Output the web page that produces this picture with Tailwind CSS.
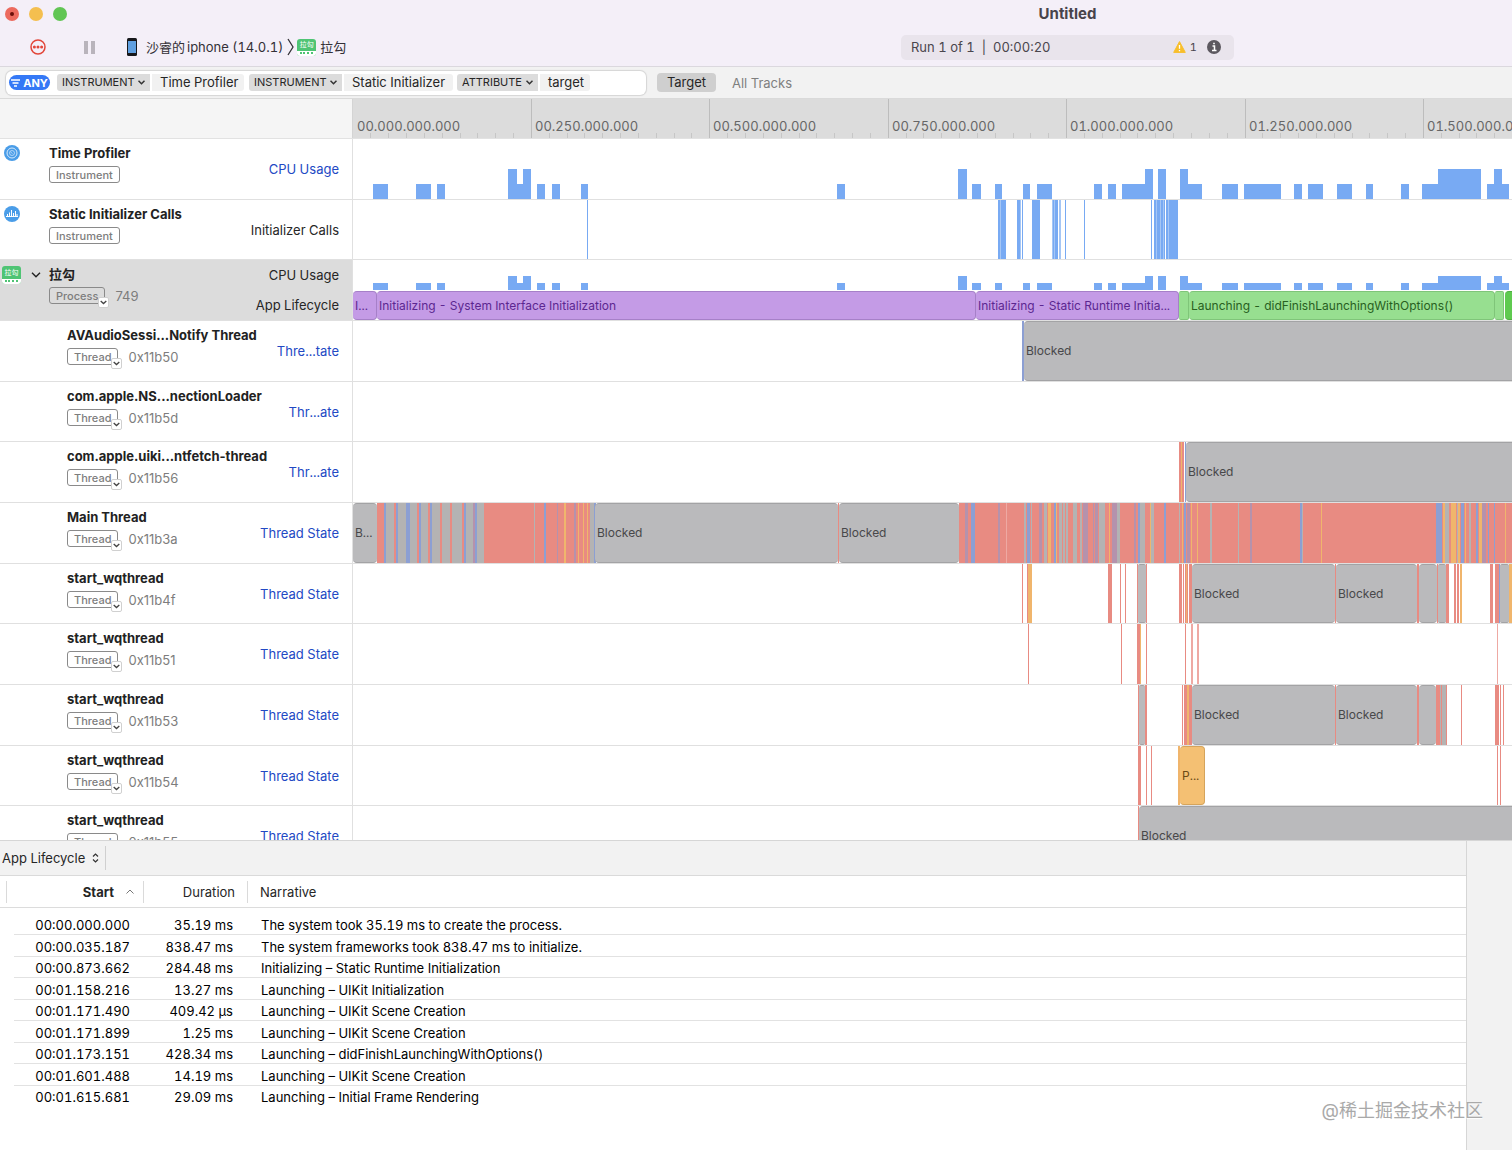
<!DOCTYPE html>
<html lang="en">

<head>
  <meta charset="UTF-8">
  <meta name="viewport" content="width=device-width, initial-scale=1.0">
  <title>Untitled</title>
  <script src="https://cdn.jsdelivr.net/npm/@tailwindcss/browser@4"></script>
</head>

<body class="flex flex-col h-screen overflow-hidden bg-white text-[#262626] text-[13px] leading-5 tabular-nums font-['Inter','Noto_Sans_CJK_SC',sans-serif]">

  <!-- Title bar -->
  <header class="grid grid-cols-[1fr_333px_278px] grid-rows-[28px_38px] items-center shrink-0 bg-[#f4eff8] border-b border-[#dbd8de]">
    <div class="flex gap-[10px] pl-[5px]">
      <button class="flex items-center justify-center size-[14px] rounded-full bg-[#ec6a5e]" aria-label="Close"><span class="size-1 rounded-full bg-[#6b0f0a]"></span></button>
      <button class="size-[14px] rounded-full bg-[#f4bf4f]" aria-label="Minimize"></button>
      <button class="size-[14px] rounded-full bg-[#61c554]" aria-label="Zoom"></button>
    </div>
    <h1 class="text-center text-[15px] font-bold text-[#48444b]">Untitled</h1>
    <div></div>

    <div class="flex items-center pl-[30px]">
      <button aria-label="Stop recording">
        <svg class="size-4" viewBox="0 0 16 16" fill="none" stroke="#e2463a">
          <circle cx="8" cy="8" r="7" stroke-width="1.5" />
          <g fill="#e2463a" stroke="none"><circle cx="4.4" cy="8" r="1.5" /><circle cx="8" cy="8" r="1.5" /><circle cx="11.6" cy="8" r="1.5" /></g>
        </svg>
      </button>
      <button class="ml-[38px]" aria-label="Pause">
        <svg class="w-[11px] h-[13px]" viewBox="0 0 11 13" fill="#b9b4bc"><rect width="4" height="13" /><rect x="7" width="4" height="13" /></svg>
      </button>
      <button class="flex items-center ml-8 text-[#333036]">
        <svg class="w-[10px] h-[18px]" viewBox="0 0 10 18"><rect width="10" height="18" rx="1.5" fill="#17181c" /><rect x="1" y="3" width="8" height="12" fill="#5f9fe0" /></svg>
        <span class="flex gap-[2px] ml-[9px]"><span>沙睿的</span><span>iphone (14.0.1)</span></span>
        <svg class="w-[7px] h-[18px] ml-1" viewBox="0 0 7 18" fill="none" stroke="#333036" stroke-width="1.3"><path d="M1 1l5 8-5 8" /></svg>
      </button>
      <button class="flex items-center ml-[3px] text-[#333036]">
        <span class="flex flex-col w-[19px] rounded-[3px] bg-[#4fc474] text-white text-[7px] leading-[12px] text-center overflow-hidden">拉勾<span class="flex justify-center h-[5px] pt-px bg-white"><span class="w-[13px] border-t-2 border-dotted border-[#4fc474]"></span></span></span>
        <span class="ml-1">拉勾</span>
      </button>
    </div>
    <div class="flex items-center h-[25px] pl-[10px] pr-[13px] rounded-[5px] bg-[#e9e4ec] text-[#4a464d]">
      <span class="whitespace-pre">Run 1 of 1  |  00:00:20</span>
      <svg class="w-[13px] h-[12px] ml-auto" viewBox="0 0 13 12"><path d="M6.500.6 12.300 11.400H.7z" fill="#f8bf2c" stroke="#f8bf2c" stroke-linejoin="round" /><path d="M6.500 4v3.700M6.500 8.900v1.300" stroke="#fff" stroke-width="1.300" /></svg>
      <span class="ml-1 text-[11px]">1</span>
      <button class="ml-[10px]" aria-label="Info">
        <svg class="size-[14px]" viewBox="0 0 14 14"><circle cx="7" cy="7" r="7" fill="#5c585f" /><path d="M5.500 6h2v4.500M5 10.500h4.500M6.200 3.500h1.600" stroke="#fff" stroke-width="1.500" fill="none" /></svg>
      </button>
    </div>
  </header>

  <!-- Filter bar -->
  <div class="flex items-center h-8 shrink-0 pl-[6px] bg-[#f2f2f2] border-b border-[#dadada]">
    <div class="flex items-center w-[640px] h-6 pl-[3px] rounded-md bg-white shadow-[0_0_1px_1px_rgb(0_0_0/0.12)]">
      <button class="flex items-center justify-center gap-[3px] w-[41px] h-[15px] rounded-full bg-[#3478f6] text-white text-[11px] font-bold">
        <svg class="w-[9px] h-[8px]" viewBox="0 0 9 8" stroke="#fff" stroke-width="1.300"><path d="M0 1h9M1.500 4h6M3 7h3" /></svg>ANY
      </button>
      <div class="relative ml-[7px]">
        <select class="block appearance-none w-[93px] h-[17px] pl-[5px] rounded-l-[3px] bg-[#dcdcdc] text-[11px] leading-[17px]" aria-label="Filter field"><option>INSTRUMENT</option></select>
        <svg class="absolute right-[5px] top-[6px] w-[7px] h-[5px] pointer-events-none" viewBox="0 0 7 5" fill="none" stroke="#333" stroke-width="1.500"><path d="M.5.7l3 3 3-3" /></svg>
      </div>
      <span class="w-[92px] h-[17px] ml-[2px] pl-2 rounded-r-[3px] bg-[#f1f1f1] leading-4 whitespace-nowrap">Time Profiler</span>
      <div class="relative ml-[5px]">
        <select class="block appearance-none w-[93px] h-[17px] pl-[5px] rounded-l-[3px] bg-[#dcdcdc] text-[11px] leading-[17px]" aria-label="Filter field"><option>INSTRUMENT</option></select>
        <svg class="absolute right-[5px] top-[6px] w-[7px] h-[5px] pointer-events-none" viewBox="0 0 7 5" fill="none" stroke="#333" stroke-width="1.500"><path d="M.5.7l3 3 3-3" /></svg>
      </div>
      <span class="w-[109px] h-[17px] ml-[2px] pl-2 rounded-r-[3px] bg-[#f1f1f1] leading-4 whitespace-nowrap">Static Initializer</span>
      <div class="relative ml-1">
        <select class="block appearance-none w-[81px] h-[17px] pl-[5px] rounded-l-[3px] bg-[#dcdcdc] text-[11px] leading-[17px]" aria-label="Filter field"><option>ATTRIBUTE</option></select>
        <svg class="absolute right-[5px] top-[6px] w-[7px] h-[5px] pointer-events-none" viewBox="0 0 7 5" fill="none" stroke="#333" stroke-width="1.500"><path d="M.5.7l3 3 3-3" /></svg>
      </div>
      <span class="w-[50px] h-[17px] ml-[2px] pl-2 rounded-r-[3px] bg-[#f1f1f1] leading-4 whitespace-nowrap">target</span>
      <input class="flex-1 min-w-0 px-1 outline-none" type="text" aria-label="Filter">
    </div>
    <button class="w-[59px] h-[19px] ml-[11px] rounded bg-[#cfcfcf] leading-[19px]">Target</button>
    <button class="ml-4 text-[#7f7f7f]">All Tracks</button>
  </div>

  <!-- Ruler -->
  <div class="flex h-10 shrink-0 border-b border-[#e2e2e2]">
    <div class="w-[353px] shrink-0 bg-[#f5f5f5] border-r border-[#d4d4d4]"></div>
    <div id="ruler" class="relative flex-1 overflow-hidden bg-[#dcdcdc] text-[#666]"></div>
  </div>

  <!-- Tracks -->
  <main id="tracks" class="grid grid-cols-1 grid-rows-[repeat(4,61px_60px_61px)] content-start flex-1 min-h-0 overflow-hidden"></main>

  <!-- Detail pane -->
  <section class="flex h-[310px] shrink-0 border-t border-[#d6d6d6]">
    <div class="flex-1 min-w-0">
      <div class="flex items-center h-[35px] bg-[#f2f2f2] border-b border-[#dadada]">
        <div class="relative">
          <select class="block appearance-none w-[106px] h-6 pl-[2px] border-r border-[#d0d0d0]" aria-label="Detail view"><option>App Lifecycle</option></select>
          <svg class="absolute right-[7px] top-[7px] w-[7px] h-[10px] pointer-events-none" viewBox="0 0 7 10" fill="none" stroke="#333" stroke-width="1.200"><path d="M1 3.500 3.500 1 6 3.500M1 6.500 3.500 9 6 6.500" /></svg>
        </div>
      </div>
      <table class="w-full table-fixed border-separate border-spacing-0">
        <thead>
          <tr class="h-8">
            <th class="w-[14px] p-0 border-b border-[#dcdcdc]"><div class="w-[7px] h-[22px] border-r border-[#dadada]"></div></th>
            <th class="w-[130px] p-0 border-b border-[#dcdcdc] font-bold">
              <div class="flex items-center justify-end h-[22px] pr-[9px] border-r border-[#dadada]">Start
                <svg class="w-2 h-[5px] ml-3" viewBox="0 0 8 5" fill="none" stroke="#777"><path d="M.5 4.500 4 1l3.500 3.500" /></svg>
              </div>
            </th>
            <th class="w-[104px] p-0 border-b border-[#dcdcdc] font-normal"><div class="h-[22px] pr-3 border-r border-[#dadada] text-right leading-[22px]">Duration</div></th>
            <th class="p-0 pl-3 border-b border-[#dcdcdc] font-normal text-left">Narrative</th>
          </tr>
        </thead>
        <tbody id="events" class="before:block before:h-[6px] text-black leading-[17px] align-bottom"></tbody>
      </table>
    </div>
    <aside class="w-[46px] shrink-0 bg-[#f2f2f2] border-l border-[#d6d6d6]"></aside>
  </section>

  <div class="absolute right-[29px] bottom-[27px] text-[18px] leading-6 text-[#a9a9a9] [text-shadow:0_1px_1px_#fff] pointer-events-none">@稀土掘金技术社区</div>

  <script>
    // x of time zero; every x below counts from the left edge of the window
    const ORIGIN = 353;
    const END = 4000;

    const fills = {
      r: 'bg-[#e88b82]',
      b: 'bg-[#8c9fd3]',
      p: 'bg-[#b592ac]',
      o: 'bg-[#f0b56c]',
      g: 'bg-[#b4b3b3]',
      l: 'bg-[#eea9a3]',
      c: 'bg-[#78aaf3]',
      d: 'bg-[#a5c6f5]',
    };

    const blocks = {
      blocked: 'bg-[#bababc] border-[#a3a3a5] text-[#48484a]',
      preempted: 'bg-[#f4c073] border-[#d5a45c] text-[#6b4a14]',
      init: 'bg-[#c49be6] border-[#a680c8] text-[#5c2791]',
      launch: 'bg-[#97df90] border-[#7fc579] text-[#28601f]',
      front: 'bg-[#5fca50] border-[#4fae42] text-black',
    };

    // [x, width, level]
    const cpu = [
      [373, 15, 1], [416, 15, 1], [437, 8, 1], [508, 9, 2], [517, 6, 1], [523, 8, 2], [537, 8, 1], [552, 8, 1], [581, 7, 1],
      [837, 8, 1], [958, 9, 2], [972, 9, 1], [995, 7, 1], [1023, 7, 1], [1037, 15, 1], [1094, 8, 1], [1108, 8, 1],
      [1122, 23, 1], [1145, 8, 2], [1158, 8, 2], [1180, 8, 2], [1188, 14, 1], [1222, 16, 1], [1244, 37, 1], [1294, 8, 1],
      [1308, 15, 1], [1337, 15, 1], [1366, 7, 1], [1401, 8, 1], [1422, 16, 1], [1438, 43, 2], [1487, 7, 1], [1494, 8, 2], [1502, 7, 1],
    ];

    // thin spans: "fill x,width"
    const initCalls = 'c587,1 c998,2 d1000,1 c1001,5 c1017,3 d1020,1 c1022,1 c1032,8 d1052,1 c1053,1 d1054,1 c1055,3 d1059,2 c1065,1 c1084,1 c1151,1 c1154,2 d1156,1 c1157,3 d1160,1 c1161,2 d1163,1 c1164,1 c1166,2 d1168,1 c1169,9';

    const mainSpans = 'g377,107 r377,7 b384,2 r394,2 b396,2 b406,4 r417,2 b419,2 r428,2 b430,2 r440,2 r450,2 r462,2 b464,2 p473,2 b475,2 ' +
      'r484,106 g534,1 b544,2 p557,1 o564,2 p574,2 o578,1 o583,1 o587,1 g590,4 b594,2 r838,1 ' +
      'r959,553 p965,3 b971,4 p998,2 l1006,1 g1024,2 b1027,3 g1031,1 p1039,3 g1044,3 o1048,3 b1054,2 o1056,1 g1059,3 g1063,2 g1066,2 ' +
      'g1073,4 g1080,2 p1083,5 p1093,1 p1095,3 g1099,6 o1109,1 p1112,5 g1117,3 p1134,2 b1138,2 g1140,5 o1150,1 g1151,3 b1164,2 ' +
      'g1179,1 o1182,1 b1184,2 p1187,3 o1191,1 o1197,1 g1210,2 g1238,1 p1250,2 b1300,2 g1302,1 o1321,1 b1436,6 o1443,2 g1445,4 ' +
      'o1451,5 g1457,1 o1458,2 b1461,3 o1465,1 g1469,2 b1476,2 o1479,3 p1482,4 b1488,1 b1494,1 o1505,1';

    const rows = [
      { icon: 'profiler', name: 'Time Profiler', badge: 'Instrument', labels: ['CPU Usage'], link: true, cpu: 15 },
      { icon: 'initializer', name: 'Static Initializer Calls', badge: 'Instrument', labels: ['Initializer Calls'], spans: initCalls },
      { icon: 'app', name: '拉勾', badge: 'Process', id: '749', labels: ['CPU Usage', 'App Lifecycle'], selected: true, cpu: 7,
        blocks: [['init', 353, 377, 'I...'], ['init', 377, 976, 'Initializing - System Interface Initialization'], ['init', 976, 1179, 'Initializing - Static Runtime Initia...'],
          ['launch', 1179, 1189], ['launch', 1189, 1495, 'Launching - didFinishLaunchingWithOptions()'], ['launch', 1495, 1504], ['front', 1505, END]] },
      { name: 'AVAudioSessi...Notify Thread', id: '0x11b50', labels: ['Thre...tate'], spans: 'b1022,2', blocks: [['blocked', 1024, END, 'Blocked']] },
      { name: 'com.apple.NS...nectionLoader', id: '0x11b5d', labels: ['Thr...ate'] },
      { name: 'com.apple.uiki...ntfetch-thread', id: '0x11b56', labels: ['Thr...ate'], spans: 'r1179,2 o1181,1 r1182,2 b1185,1', blocks: [['blocked', 1186, END, 'Blocked']] },
      { name: 'Main Thread', id: '0x11b3a', labels: ['Thread State'], spans: mainSpans,
        blocks: [['blocked', 353, 377, 'B...'], ['blocked', 595, 838, 'Blocked'], ['blocked', 839, 959, 'Blocked']] },
      { name: 'start_wqthread', id: '0x11b4f', labels: ['Thread State'],
        spans: 'r1022,1 r1027,1 o1028,4 r1108,4 r1120,1 r1125,1 r1137,1 r1146,1 r1179,3 r1183,1 r1185,1 o1186,1 r1187,1 r1189,3 r1335,1 r1417,2 r1437,1 r1446,3 r1454,2 r1457,2 o1460,2 r1490,3 r1495,4 b1499,1 o1509,3',
        blocks: [['blocked', 1138, 1146], ['blocked', 1192, 1335, 'Blocked'], ['blocked', 1336, 1417, 'Blocked'], ['blocked', 1419, 1437], ['blocked', 1438, 1446], ['blocked', 1500, 1509]] },
      { name: 'start_wqthread', id: '0x11b51', labels: ['Thread State'], spans: 'r1028,1 r1121,1 r1137,3 o1140,1 r1146,1 r1185,1 l1191,2 l1197,2 l1497,1' },
      { name: 'start_wqthread', id: '0x11b53', labels: ['Thread State'],
        spans: 'r1138,1 r1145,2 r1182,1 r1184,3 o1187,2 r1189,3 r1335,1 r1417,2 r1436,4 g1440,1 r1441,1 g1442,4 r1446,1 r1461,1 r1495,4 r1500,1 r1503,1',
        blocks: [['blocked', 1139, 1145], ['blocked', 1192, 1335, 'Blocked'], ['blocked', 1336, 1417, 'Blocked'], ['blocked', 1419, 1436]] },
      { name: 'start_wqthread', id: '0x11b54', labels: ['Thread State'], spans: 'r1138,3 r1146,1 r1151,1 o1178,2 r1497,1 r1500,1', blocks: [['preempted', 1180, 1205, 'P...']] },
      { name: 'start_wqthread', id: '0x11b55', labels: ['Thread State'], spans: 'r1138,1', blocks: [['blocked', 1139, END, 'Blocked']] },
    ];

    const icons = {
      profiler: `<svg class="size-4 ml-[4px]" viewBox="0 0 16 16" fill="none" stroke="#d6eafc"><circle cx="8" cy="8" r="8" fill="#4a9de8" stroke="none" /><circle cx="8" cy="8" r="5" /><circle cx="8" cy="8" r="2.500" stroke-width=".7" /><path d="M6.500 7l2 1.500" stroke-width=".7" /></svg>`,
      initializer: `<svg class="size-4 ml-[4px]" viewBox="0 0 16 16" fill="none" stroke="#fff"><circle cx="8" cy="8" r="8" fill="#4a9de8" stroke="none" /><path d="M2 10.500h12M3.500 10V8M5.500 10V6.500M7.500 10V4M9.500 10V7M11.500 10V5M13 10V8" /></svg>`,
      app: `<span class="flex flex-col w-[19px] ml-[2px] rounded-[3px] bg-[#4fc474] text-white text-[7px] leading-[13px] text-center overflow-hidden">拉勾<span class="flex justify-center h-[5px] pt-px bg-white"><span class="w-[13px] border-t-2 border-dotted border-[#4fc474]"></span></span></span>`,
    };

    const drawSpans = list => (list ? list.split(' ') : []).map(item => {
      const [x, w] = item.slice(1).split(',').map(Number);
      return `<i class="absolute inset-y-0 ${fills[item[0]]}" style="left:${x - ORIGIN}px;width:${w}px"></i>`;
    }).join('');

    const drawBlocks = (list, place) => (list || []).map(([kind, from, to, text]) =>
      `<div class="absolute ${place} flex items-center border-y overflow-hidden whitespace-nowrap text-[12px] ${to - from > 12 ? 'rounded-[4px]' : 'rounded-[2px]'} ${kind === 'blocked' ? '' : 'border-r'} ${text ? 'pl-[2px]' : ''} ${blocks[kind]}" style="left:${from - ORIGIN}px;width:${to - from}px">${text || ''}</div>`
    ).join('');

    const drawCpu = unit => cpu.map(([x, w, level]) =>
      `<i class="absolute bottom-0 ${fills.c}" style="left:${x - ORIGIN}px;width:${w}px;height:${level * unit}px"></i>`
    ).join('');

    document.getElementById('tracks').innerHTML = rows.map(row => {
      const isThread = !row.badge;
      const labels = row.labels.map(label => row.link || isThread
        ? `<a class="flex flex-1 items-center text-[#2249c4]" href="#">${label}</a>`
        : `<span class="flex flex-1 items-center">${label}</span>`).join('');
      return `
        <div class="flex min-h-0">
          <div class="flex w-[353px] shrink-0 border-r border-b border-[#e0e0e0] ${row.selected ? 'bg-[#dcdcdc]' : ''}">
            <div class="w-[31px] shrink-0 pt-[6px]">${icons[row.icon] || ''}</div>
            <div class="w-[18px] shrink-0 pt-[12px]">${row.selected ? '<svg class="w-[10px] h-[6px]" viewBox="0 0 10 6" fill="none" stroke="#222" stroke-width="1.400"><path d="M1 .7l4 4 4-4" /></svg>' : ''}</div>
            <div class="flex-1 min-w-0 pt-1 whitespace-nowrap proportional-nums ${isThread ? 'pl-[18px]' : ''}">
              <h2 class="font-bold text-[#222]">${row.name}</h2>
              <div class="flex items-center h-[17px] mt-[3px] text-[#7d7d7d]">
                <span class="relative flex items-center h-[17px] px-[6px] rounded-[3px] border border-[#8a8a8a] text-[11px] font-medium">${row.badge || 'Thread'}${row.id ? `
                  <button class="absolute -right-[5px] -bottom-[5px] flex items-center justify-center size-[11px] rounded-[2px] border border-[#d0d0d0] bg-white" aria-label="Options"><svg class="w-[7px] h-[5px]" viewBox="0 0 7 5" fill="none" stroke="#444" stroke-width="1.300"><path d="M.7.9l2.800 2.600L6.300.9" /></svg></button>` : ''}
                </span>
                <span class="ml-[10px]">${row.id || ''}</span>
              </div>
            </div>
            <div class="flex flex-col items-end pr-[13px]">${labels}</div>
          </div>
          <div class="relative flex-1 overflow-hidden border-b border-[#e0e0e0]">
            ${row.cpu ? `<div class="relative ${row.selected ? 'h-[30px]' : 'h-full'}">${drawCpu(row.cpu)}</div>` : ''}
            ${drawSpans(row.spans)}
            ${drawBlocks(row.blocks, row.selected ? 'bottom-0 h-[29px]' : 'inset-y-0')}
          </div>
        </div>`;
    }).join('');

    // one major tick each 250 ms, ten minor ticks between
    const rulerEl = document.getElementById('ruler');
    let ruler = '';
    for (let i = 0; i * 17.85 < rulerEl.clientWidth; i++) {
      const x = Math.floor(i * 17.84);
      if (i % 10 === 0) {
        const ms = i * 25;
        const label = String(Math.floor(ms / 1000)).padStart(2, '0') + '.' + String(ms % 1000).padStart(3, '0') + '.000.000';
        ruler += `<div class="absolute inset-y-0 flex items-end pb-[2px] ${i ? 'pl-[3px] border-l border-[#bdbdbd]' : 'pl-1'}" style="left:${x}px">${label}</div>`;
      } else {
        ruler += `<i class="absolute bottom-0 w-px h-[5px] bg-[#c6c6c6]" style="left:${x}px"></i>`;
      }
    }
    rulerEl.innerHTML = ruler;

    const events = [
      ['00:00.000.000', '35.19 ms', 'The system took 35.19 ms to create the process.'],
      ['00:00.035.187', '838.47 ms', 'The system frameworks took 838.47 ms to initialize.'],
      ['00:00.873.662', '284.48 ms', 'Initializing – Static Runtime Initialization'],
      ['00:01.158.216', '13.27 ms', 'Launching – UIKit Initialization'],
      ['00:01.171.490', '409.42 µs', 'Launching – UIKit Scene Creation'],
      ['00:01.171.899', '1.25 ms', 'Launching – UIKit Scene Creation'],
      ['00:01.173.151', '428.34 ms', 'Launching – didFinishLaunchingWithOptions()'],
      ['00:01.601.488', '14.19 ms', 'Launching – UIKit Scene Creation'],
      ['00:01.615.681', '29.09 ms', 'Launching – Initial Frame Rendering'],
    ];
    document.getElementById('events').innerHTML = events.map(([start, duration, text]) => `
      <tr class="group h-[21px] even:h-[22px]">
        <td class="p-0"></td>
        <td class="p-0 pr-[14px] border-b border-[#e2e2e2] group-last:border-transparent text-right">${start}</td>
        <td class="p-0 pr-[15px] border-b border-[#e2e2e2] group-last:border-transparent text-right">${duration}</td>
        <td class="p-0 pl-[13px] border-b border-[#e2e2e2] group-last:border-transparent">${text}</td>
      </tr>`).join('');
  </script>

</body>

</html>
